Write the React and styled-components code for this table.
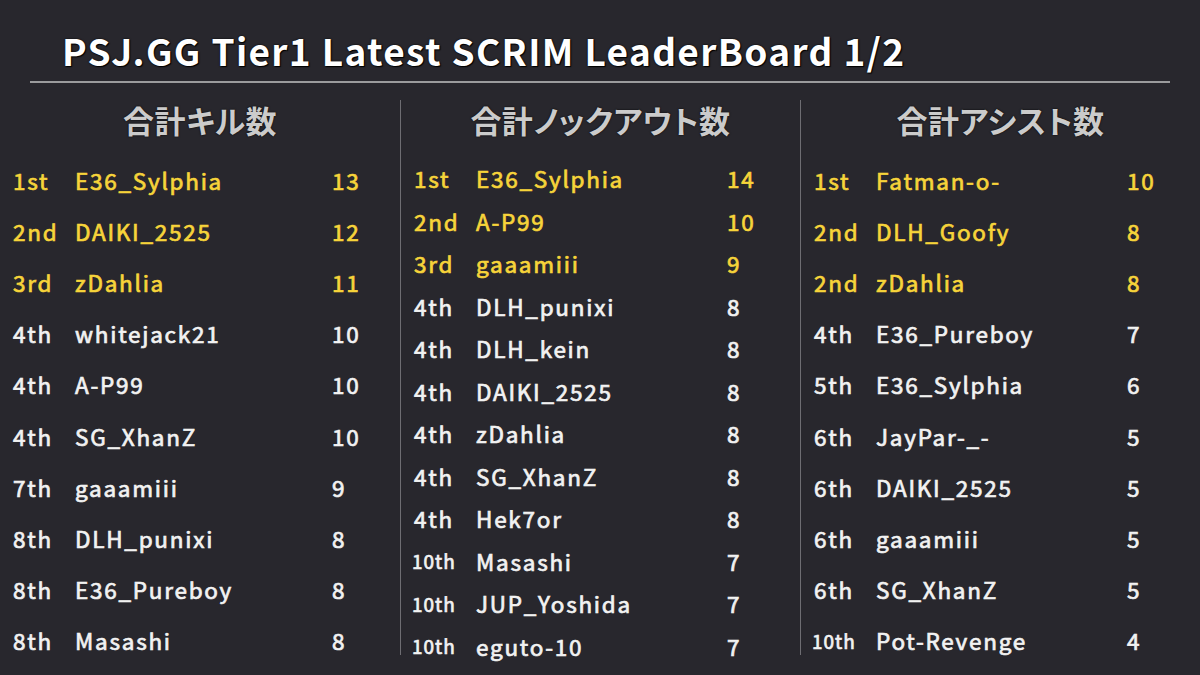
import React from 'react';
import styled, { createGlobalStyle } from 'styled-components';

const GlobalStyle = createGlobalStyle`
	html, body {
		margin: 0;
		padding: 0;
		background: #28272d;
	}
	body {
		font-family: "Noto Sans CJK JP", "Noto Sans", sans-serif;
	}
`;

const Page = styled.div`
	width: 1200px;
	height: 675px;
	overflow: hidden;
	background: #28272d;
	color: #f2f2f2;
`;

const TitleBar = styled.div`
	margin: 0 30px;
	padding: 29px 0 10px 32px;
	border-bottom: 2px solid #9b9b9d;
`;

const Title = styled.h1`
	margin: 0;
	font-size: 37px;
	line-height: 42px;
	font-weight: 700;
	letter-spacing: 1.35px;
	color: #ffffff;
	text-shadow: 0 0 2px #000, 1px 1px 1px #000;
`;

const Board = styled.div`
	display: grid;
	grid-template-columns: repeat(3, 400px);
	margin-top: 17px;
`;

const Column = styled.div`
	height: 555px;
	border-left: ${(props) => (props.divided ? '1px solid #6e6d72' : 'none')};
`;

const Header = styled.h2`
	margin: 0;
	height: 54px;
	text-align: center;
	font-size: 31px;
	line-height: 40px;
	font-weight: 700;
	letter-spacing: 0.5px;
	font-feature-settings: "palt";
	color: #cbcbcb;
	text-shadow: 0 0 2px #000;
`;

const List = styled.div`
	padding-top: ${(props) => props.offset}px;
`;

const Row = styled.div`
	display: grid;
	grid-template-columns: 62px ${(props) => props.valueAt - 75}px auto;
	align-items: center;
	height: ${(props) => props.height}px;
	padding-left: 13px;
	font-size: 22.5px;
	font-weight: 400;
	letter-spacing: 1.75px;
	-webkit-text-stroke: 0.7px currentColor;
	color: ${(props) => (props.top ? '#f7d43a' : '#f2f2f2')};
`;

const Rank = styled.span`
	font-size: ${(props) => (props.small ? '19px' : '22.5px')};
	letter-spacing: ${(props) => (props.small ? '1px' : '1.75px')};
	margin-left: ${(props) => (props.small ? '-2px' : '0')};
`;

const Name = styled.span`
	white-space: nowrap;
`;

const Value = styled.span``;

const boards = [
	{
		title: '合計キル数',
		rowHeight: 51.2,
		offset: 0,
		valueAt: 332,
		rows: [
			['1st', 'E36_Sylphia', 13, true],
			['2nd', 'DAIKI_2525', 12, true],
			['3rd', 'zDahlia', 11, true],
			['4th', 'whitejack21', 10],
			['4th', 'A-P99', 10],
			['4th', 'SG_XhanZ', 10],
			['7th', 'gaaamiii', 9],
			['8th', 'DLH_punixi', 8],
			['8th', 'E36_Pureboy', 8],
			['8th', 'Masashi', 8],
		],
	},
	{
		title: '合計ノックアウト数',
		rowHeight: 42.5,
		offset: 3,
		valueAt: 326,
		rows: [
			['1st', 'E36_Sylphia', 14, true],
			['2nd', 'A-P99', 10, true],
			['3rd', 'gaaamiii', 9, true],
			['4th', 'DLH_punixi', 8],
			['4th', 'DLH_kein', 8],
			['4th', 'DAIKI_2525', 8],
			['4th', 'zDahlia', 8],
			['4th', 'SG_XhanZ', 8],
			['4th', 'Hek7or', 8],
			['10th', 'Masashi', 7],
			['10th', 'JUP_Yoshida', 7],
			['10th', 'eguto-10', 7],
		],
	},
	{
		title: '合計アシスト数',
		rowHeight: 51.2,
		offset: 0,
		valueAt: 326,
		rows: [
			['1st', 'Fatman-o-', 10, true],
			['2nd', 'DLH_Goofy', 8, true],
			['2nd', 'zDahlia', 8, true],
			['4th', 'E36_Pureboy', 7],
			['5th', 'E36_Sylphia', 6],
			['6th', 'JayPar-_-', 5],
			['6th', 'DAIKI_2525', 5],
			['6th', 'gaaamiii', 5],
			['6th', 'SG_XhanZ', 5],
			['10th', 'Pot-Revenge', 4],
		],
	},
];

export default function App() {
	return (
		<Page>
			<GlobalStyle />
			<TitleBar>
				<Title>PSJ.GG Tier1 Latest SCRIM LeaderBoard 1/2</Title>
			</TitleBar>
			<Board>
				{boards.map((board, i) => (
					<Column key={board.title} divided={i > 0}>
						<Header>{board.title}</Header>
						<List offset={board.offset}>
							{board.rows.map(([rank, name, value, top], j) => (
								<Row key={j} top={top} height={board.rowHeight} valueAt={board.valueAt}>
									<Rank small={rank.length > 3}>{rank}</Rank>
									<Name>{name}</Name>
									<Value>{value}</Value>
								</Row>
							))}
						</List>
					</Column>
				))}
			</Board>
		</Page>
	);
}
